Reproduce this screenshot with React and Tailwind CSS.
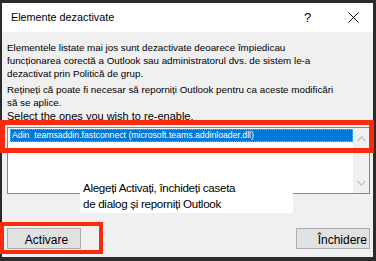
import React from 'react';

const Chevron = ({ down }) => (
  <svg width="9" height="6" viewBox="0 0 9 6" className={down ? 'rotate-180' : ''}>
    <path d="M0.5 5 L4.5 1 L8.5 5" fill="none" stroke="#c4c4c4" strokeWidth="1.3" />
  </svg>
);

export default function App() {
  return (
    <div className="relative w-[376px] h-[261px] overflow-hidden bg-[#2b2b2b] font-['Liberation_Sans',sans-serif] text-black">
      <div className="ml-[2px] mr-[3px] mt-[3px] h-[254px] flex flex-col bg-[#f0f0f0]">
        <div className="h-[29px] shrink-0 bg-white flex items-center pl-[9px]">
          <span className="text-[10.8px] flex-1">Elemente dezactivate</span>
          <span className="text-[13px] w-[8px] mr-[36px]">?</span>
          <svg width="11" height="11" viewBox="0 0 11 11" className="mr-[14px]">
            <path d="M0.5 0.5 L10.5 10.5 M10.5 0.5 L0.5 10.5" stroke="#000" strokeWidth="1" />
          </svg>
        </div>

        <div className="flex-1 flex flex-col pl-[5px] pr-[3px] pt-[9px]">
          <p className="text-[9.8px] leading-[13px]">
            Elementele listate mai jos sunt dezactivate deoarece împiedicau<br />
            funcționarea corectă a Outlook sau administratorul dvs. de sistem le-a<br />
            dezactivat prin Politică de grup.
          </p>
          <p className="text-[9.8px] leading-[13px] mt-[3px]">
            Rețineți că poate fi necesar să reporniți Outlook pentru ca aceste modificări<br />
            să se aplice.
          </p>
          <p className="text-[11px] leading-[15px]">Select the ones you wish to re-enable.</p>

          <div className="mt-[3px] h-[67px] border border-[#828790] bg-white flex">
            <div className="flex-1 pl-[2px] pt-[1px]">
              <div className="h-[13px] bg-[#0078d7] border border-dotted border-[#f0a030] text-white text-[8.7px] leading-[11px] pl-[1px] whitespace-nowrap">
                Adin&nbsp; teamsaddin.fastconnect (microsoft.teams.addinloader.dll)
              </div>
            </div>
            <div className="w-[16px] bg-[#f0f0f0] flex flex-col items-center justify-between pt-[8px] pb-[7px]">
              <Chevron />
              <Chevron down />
            </div>
          </div>

          <div className="mt-[34px] flex justify-between">
            <div className="w-[74px] h-[21px] bg-[#e1e1e1] border border-[#adadad] flex items-end justify-center pl-[5px] text-[12px] leading-[14px] pb-[1px]">
              Activare
            </div>
            <div className="w-[74px] h-[21px] bg-[#e1e1e1] border border-[#adadad] flex items-end justify-end pr-[2px] text-[12px] leading-[14px] pb-[1px]">
              Închidere
            </div>
          </div>
        </div>
      </div>

      <div className="absolute left-0 top-[120px] w-[374px] h-[33px] border-[5px] border-[#fa2a0c]" />
      <div className="absolute left-0 top-[222px] w-[103px] h-[32px] border-[4px] border-[#fa2a0c]" />

      <div className="absolute left-[80px] top-[178px] w-[213px] h-[35px] bg-white pl-[3px] pt-[1.5px] text-[11.6px] leading-[16px] tracking-[-0.3px]">
        Alegeți Activați, închideți caseta<br />
        de dialog și reporniți Outlook
      </div>
    </div>
  );
}
